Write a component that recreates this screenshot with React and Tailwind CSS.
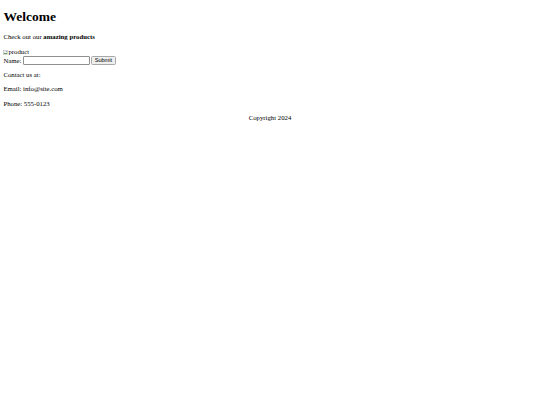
export default function App() {
    return (
        <div className="min-h-[405px] bg-white text-black px-[3.4px] pb-[3.4px] pt-px" style={{ fontFamily: '"Liberation Serif", "Times New Roman", serif' }}>
            <h1 className="mt-[8px] mb-[8px] text-[13.5px] font-bold leading-[1.15]">Welcome</h1>
            <p className="mt-[6.75px] mb-[7.5px] text-[6.75px] leading-[1.15]">
                Check out our <b className="font-bold">amazing products</b>
            </p>
            <div className="flex items-end text-[6.75px] leading-[1.15] h-[8.4px]">
                <svg width="5" height="5" viewBox="0 0 16 16" className="mb-[1.5px]">
                    <rect x="1" y="1" width="14" height="14" fill="#f1f1f1" stroke="#aaa" strokeWidth="1.5" />
                    <path d="M2 13 L6 8 L9 11 L11 9 L14 13 Z" fill="#5a9a4a" />
                    <circle cx="11" cy="5" r="1.6" fill="#6aa0d8" />
                </svg>
                <span>product</span>
            </div>
            <form className="flex items-center text-[6.75px] leading-[1.15]" onSubmit={e => e.preventDefault()}>
                <label>Name:</label>
                <input type="text" className="ml-[1.5px] w-[67px] h-[9px] border border-[#8f8f8f] rounded-[1px] bg-white" />
                <button type="submit" className="ml-px w-[25px] h-[9px] border border-[#a8a8a8] rounded-[1.5px] bg-[#efefef] text-[5.6px] leading-none" style={{ fontFamily: '"Liberation Sans", Arial, sans-serif' }}>
                    Submit
                </button>
            </form>
            <div className="text-[6.75px] leading-[1.15]">
                <p className="mt-[5.5px] mb-[6.75px]">Contact us at:</p>
                <p className="my-[6.75px]">Email: info@site.com</p>
                <p className="my-[6.75px]">Phone: 555-0123</p>
            </div>
            <p className="my-[6.75px] text-center text-[6.75px] leading-[1.15]">Copyright 2024</p>
        </div>
    );
}
